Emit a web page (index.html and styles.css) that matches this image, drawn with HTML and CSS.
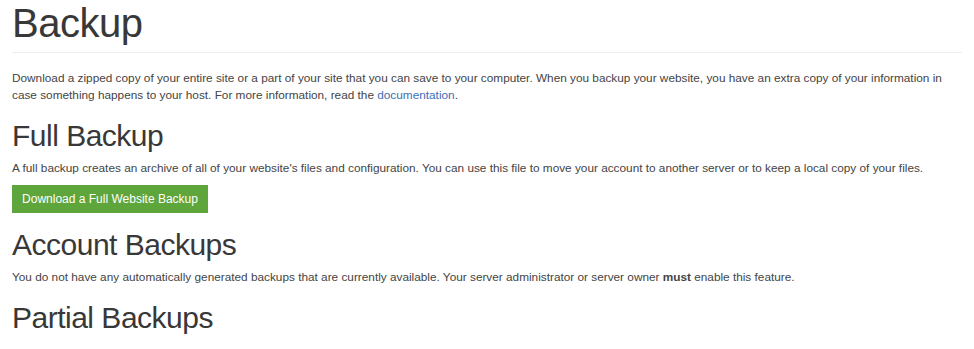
FILE: index.html
```html
<!DOCTYPE html>
<html lang="en">
    <head>
        <meta charset="UTF-8" />
        <meta name="viewport" content="width=device-width, initial-scale=1.0" />
        <title>Backup</title>
        <link rel="stylesheet" href="styles.css">
    </head>
    <body>
        <div class="container">
            <div class="page-header">
                <h1>Backup</h1>
            </div>

            <p class="intro">
                Download a zipped copy of your entire site or a part of your site that you can save to your computer. When you backup your website, you have an extra copy of your information in case something happens to your host. For more information, read the <a href="#">documentation</a>.
            </p>

            <section class="section">
                <h2>Full Backup</h2>
                <p>A full backup creates an archive of all of your website's files and configuration. You can use this file to move your account to another server or to keep a local copy of your files.</p>
                <a class="btn btn-primary" href="#">Download a Full Website Backup</a>
            </section>

            <section class="section">
                <h2>Account Backups</h2>
                <p>You do not have any automatically generated backups that are currently available. Your server administrator or server owner <strong>must</strong> enable this feature.</p>
            </section>

            <section class="section">
                <h2>Partial Backups</h2>
            </section>
        </div>
    </body>
</html>
```

FILE: styles.css
```css
:root {
    --text: #444444;
    --heading: #383838;
    --link: #3d6eb4;
    --border: #eeeeee;
    --success: #5ea53b;
}

* {
    margin: 0;
    padding: 0;
    box-sizing: border-box;
}

body {
    font-family: "Liberation Sans", Arial, sans-serif;
    background-color: #ffffff;
    color: var(--text);
    font-size: 11.8px;
    line-height: 17px;
}

.container {
    width: 950px;
    margin-left: 12px;
}

.page-header {
    border-bottom: 1px solid var(--border);
    padding-bottom: 6px;
}

h1 {
    color: var(--heading);
    font-size: 40px;
    font-weight: 400;
    line-height: 46px;
    letter-spacing: -0.5px;
}

.intro {
    margin-top: 17px;
}

a {
    color: var(--link);
    text-decoration: none;
}

h2 {
    color: var(--heading);
    font-size: 30px;
    font-weight: 400;
    line-height: 34px;
    letter-spacing: -0.5px;
}

.section {
    margin-top: 15px;
}

.section p {
    margin-top: 7px;
}

.btn {
    display: block;
    margin-top: 8px;
    margin-bottom: 4px;
    width: 196px;
    height: 28px;
    line-height: 28px;
    text-align: center;
    color: #ffffff;
    font-size: 12px;
}

.btn-primary {
    background-color: var(--success);
}
```
